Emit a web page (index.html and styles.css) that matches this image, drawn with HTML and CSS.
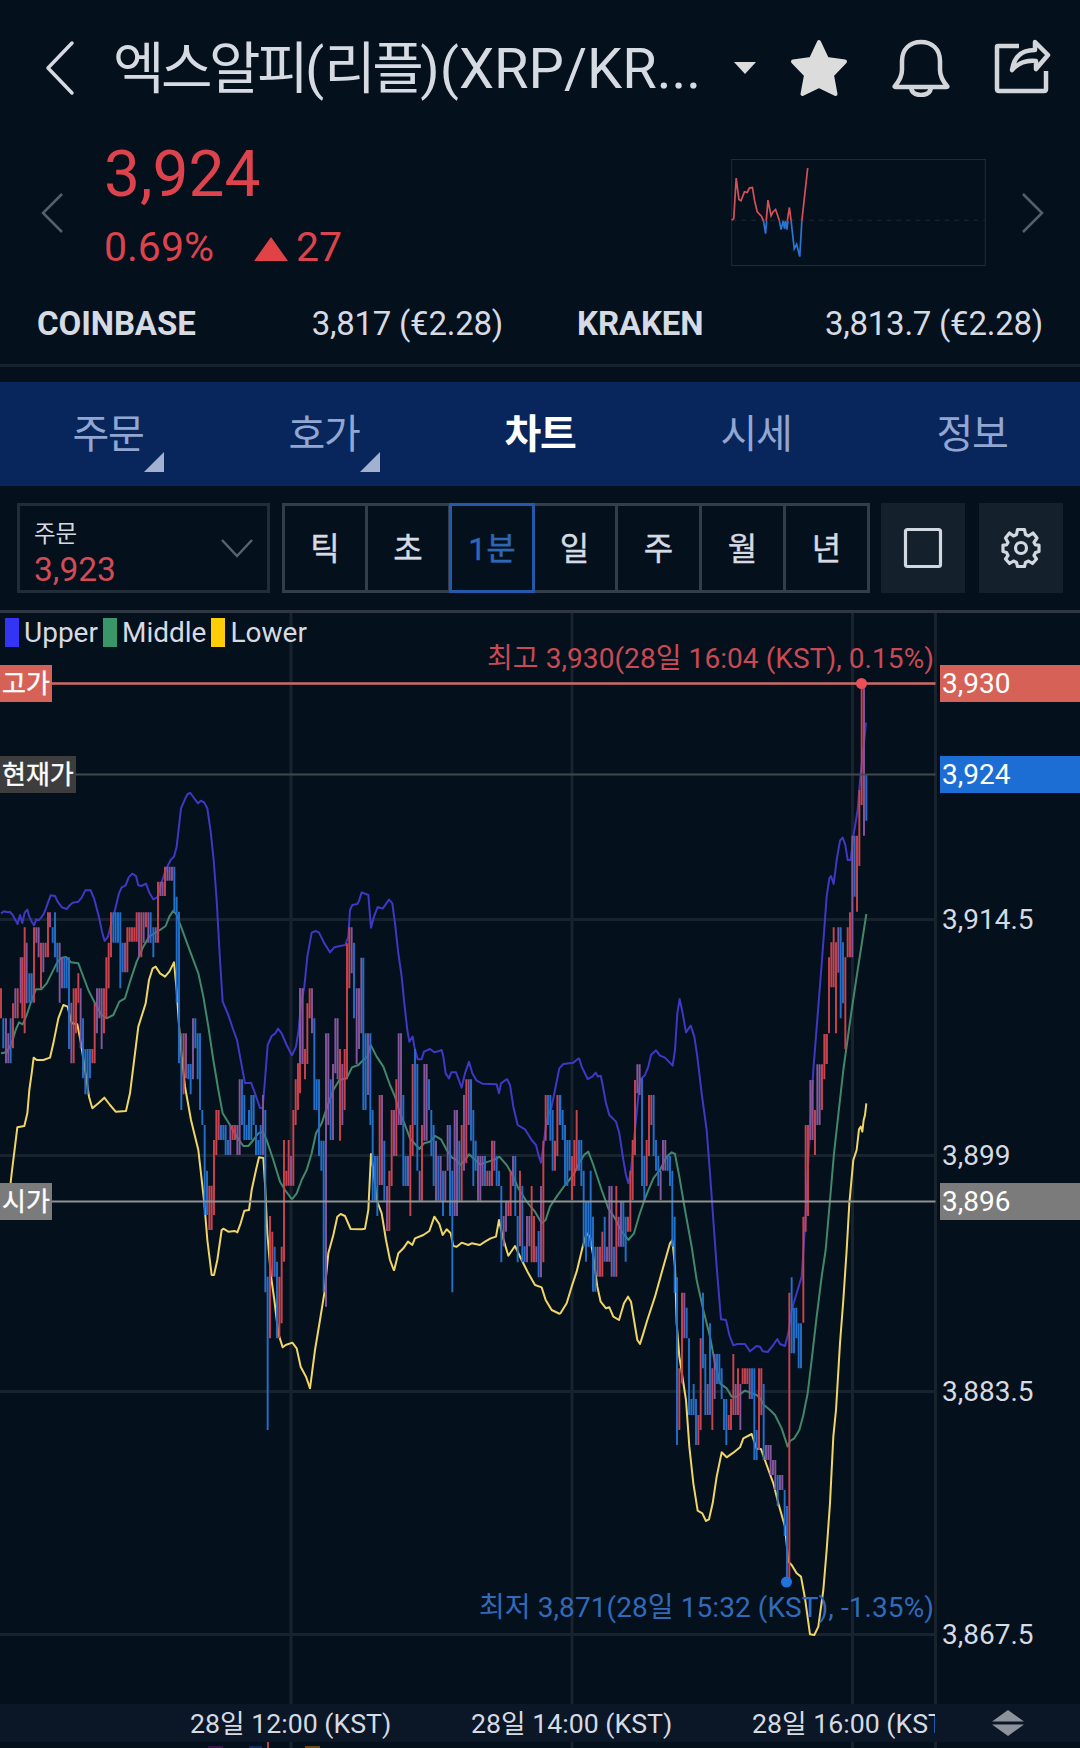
FILE: index.html
```html
<!DOCTYPE html>
<html lang="ko">
<head>
<meta charset="utf-8">
<title>XRP/KRW 차트</title>
<link rel="stylesheet" href="styles.css">
</head>
<body>
<header class="topbar">
  <svg class="back" viewBox="0 0 30 56"><path d="M27 3L3 28L27 53"/></svg>
  <h1 class="title"><span class="ko">엑스알피</span>(<span class="ko">리플</span>)(XRP/KR...</h1>
  <svg class="caret" viewBox="0 0 24 14"><path d="M1 1H23L12 13Z"/></svg>
  <svg class="star" viewBox="0 0 58 58"><path d="M29 3L37 20L55 22.500L42 36L45.500 55L29 47L12.500 55L16 36L3 22.500L21 20Z"/></svg>
  <svg class="bell" viewBox="0 0 58 58"><path d="M3 47C8 41 10 36 10 31V22C10 10 18 3 29 3S48 10 48 22V31C48 36 50 41 55 47Q56 48 54 48H4Q2 48 3 47ZM19 49C20 54 24 56 29 56S38 54 39 49"/></svg>
  <svg class="share" viewBox="0 0 58 58"><path d="M25 7H4Q3 7 3 8V50Q3 52 5 52H50Q52 52 52 50V32M41 3L54 16L42 30V22C31 21 24 24 18 31C20 18 28 11 41 11Z"/></svg>
</header>

<section class="quote">
  <svg class="nav" viewBox="0 0 22 40"><path d="M21 1L2 20L21 39"/></svg>
  <div class="quote-main">
    <div class="price">3,924</div>
    <div class="change"><span>0.69%</span><i class="up"></i><span>27</span></div>
  </div>
  <svg class="spark" viewBox="555 477 738 320" preserveAspectRatio="none">
    <rect class="spark-box" x="557" y="478.500" width="734" height="317"/>
    <path class="spark-base" d="M557 660H1291"/>
    <path class="spark-up" d="M557 660L563 655L570 534L578 598L584 602L594 575L602 577L608 564L617 562L623 600L631 635L643 648L649 662M657 662L662 600L671 647L676 636L684 628L690 645L695 662M718 662L724 622L729 662M760 662L777 504"/>
    <path class="spark-down" d="M649 662L655 700L658 662M695 662L700 688L706 662L710 686L713 662L717 688L720 662M729 662L738 746L745 732L754 769L760 662"/>
  </svg>
  <svg class="nav" viewBox="0 0 22 40"><path d="M1 1L20 20L1 39"/></svg>
</section>

<section class="markets">
  <div class="market"><b>COINBASE</b><span>3,817 (€2.28)</span></div>
  <div class="market"><b>KRAKEN</b><span>3,813.7 (€2.28)</span></div>
</section>

<nav class="tabs">
  <a class="tab more">주문</a><a class="tab more">호가</a><a class="tab active">차트</a><a class="tab">시세</a><a class="tab">정보</a>
</nav>

<section class="toolbar">
  <div class="order">
    <div class="order-text"><span class="order-label">주문</span><span class="order-price">3,923</span></div>
    <svg class="order-arrow" viewBox="0 0 34 20"><path d="M2 2L17 18L32 2"/></svg>
  </div>
  <div class="ranges">
    <span class="short">틱</span><span class="short">초</span><span class="on">1분</span><span>일</span><span>주</span><span>월</span><span>년</span>
  </div>
  <div class="tool"><svg viewBox="0 0 40 42"><rect x="2.500" y="2.500" width="35" height="37" rx="2"/></svg></div>
  <div class="tool"><svg viewBox="0 0 40 42"><path d="M16.500 2.500H23.500L24.500 7.500L27.500 9L32 6L36 11L33 15.500L34.500 18H38V24.500L34.500 25.500L33 28.500L35.500 32L31.500 36.500L27.500 34L24.500 35.500L23.500 39.500H16.500L15.500 35.500L12.500 34L8.500 36.500L4.500 32L7 28.500L5.500 25.500L2 24.500V18H5.500L7 15.500L4.500 11L8.500 6L12.500 9L15.500 7.500Z"/><circle cx="20" cy="21" r="5.500"/></svg></div>
</section>

<main class="chart">
  <div class="legend"><span class="upper">Upper</span><span class="middle">Middle</span><span class="lower">Lower</span></div>
  <svg class="plot" viewBox="0 613 1080 1091">
    <path class="grid" d="M291 613V1704M572 613V1704M852.500 613V1704M935.500 613V1704M0 919.500H935M0 1155.500H935M0 1391.500H935M0 1634.500H935"/>

    <g class="bands" transform="translate(0 760) scale(.33333)">
      <path class="u" d="M3 460L12 454L22 457L30 456L38 465L46 480L53 492L60 465L67 489L74 458L82 449L88 470L95 485L102 496L109 478L116 481L124 472L131 462L138 445L145 425L152 406L165 408L173 425L186 442L200 447L210 435L218 428L235 425L245 413L256 391L272 391L282 415L296 467L306 515L314 543L324 530L335 485L345 450L357 400L365 382L377 376L386 352L397 341L408 348L415 376L424 378L438 371L448 398L460 418L472 412L484 370L497 330L512 300L522 290L530 260L543 145L556 115L563 102L571 99L582 114L594 130L603 122L612 127L622 145L632 215L641 300L650 420L660 600L668 725L685 765L700 810L711 840L722 900L735 970L753 968L765 1000L780 1044L788 1044L795 960L803 855L815 828L826 820L834 806L845 820L860 855L876 887"/>
      <path class="m" d="M3 880L20 877L35 850L47 810L57 787L68 793L80 765L95 720L108 688L124 688L140 670L155 640L170 610L183 594L198 591L213 607L235 610L248 645L265 690L285 730L305 765L320 775L340 765L358 725L375 715L390 665L410 605L430 560L447 530L460 522L480 510L497 498L508 470L520 452L530 465L545 505L565 560L595 640L610 710L625 800L640 900L655 990L668 1060L690 1095L710 1130L730 1158L745 1158L760 1140L775 1120L788 1115L800 1140L820 1200L840 1265L855 1290L876 1318"/>
      <path class="l" d="M28 1305L35 1240L52 1102L73 1098L82 1060L88 990L95 940L101 893L110 900L130 900L150 893L160 850L175 775L190 735L203 740L215 790L232 793L243 850L255 930L267 1010L277 1045L295 1030L313 1013L330 1035L347 1055L378 1053L390 1000L400 920L415 800L437 730L447 660L458 625L467 620L480 640L495 650L508 635L522 607L530 690L540 840L555 980L573 1080L595 1170L613 1330"/>
    </g>
    <path class="l" transform="translate(0 1150) scale(.33333)" d="M613 160L622 270L635 375L642 375L652 330L665 240L670 236L685 245L705 243L712 247L722 220L733 182L747 180L755 120L768 60L777 22L790 24L795 100L802 250L812 370L823 450L835 550L848 592L857 585L877 578L890 595L902 650L918 680L930 715L945 600L960 510L973 430L985 310L1000 255L1012 200L1022 192L1035 198L1052 237L1085 238L1095 236L1105 180L1113 12L1120 60L1130 150L1145 190L1158 270L1170 330L1182 362"/>
    <g class="bands" transform="translate(280 860) scale(.33333)">
      <path class="u" d="M36 587L48 560L56 510L62 440L73 380L82 290L95 218L108 213L117 218L132 248L150 277L163 262L180 258L196 255L205 230L210 150L217 135L232 132L237 123L245 97L265 105L273 203L282 170L293 141L308 146L327 119L337 130L345 190L355 280L365 350L373 430L382 510L388 545L398 530L403 560L413 598L425 598L432 575L450 567L463 577L475 574L485 570L490 590L497 640L507 655L514 637L528 637L545 683L555 640L567 605L577 640L590 662L607 671L650 673L657 700L663 670L681 657L690 675L700 740L713 795L735 808L755 840L768 855L777 890L783 908L790 860L800 780L815 740L825 690L838 625L850 612L880 608L897 594"/>
      <path class="m" d="M36 1018L50 1000L65 960L80 930L95 880L108 820L125 790L140 745L160 690L178 660L200 655L216 622L235 615L250 600L262 590L272 555L290 590L310 620L330 675L345 710L360 760L375 795L390 835L405 852L418 867L432 850L450 845L465 828L483 838L500 870L515 892L530 900L540 915L555 900L567 883L580 895L600 913L625 905L645 898L658 890L680 915L700 950L715 985L740 1025L765 1055L785 1090L797 1080L810 1040L830 1010L855 975L880 945L900 905"/>
      <path class="l" d="M342 1232L355 1180L370 1165L384 1145L397 1155L405 1135L430 1125L448 1113L463 1070L478 1092L488 1125L500 1108L512 1120L520 1158L530 1160L545 1148L565 1155L575 1150L600 1155L615 1145L632 1135L648 1130L657 1080L668 1130L685 1187L705 1158L725 1200L745 1240L765 1275L785 1282L797 1320L815 1350L840 1362"/>
    </g>
    <g class="bands" transform="translate(560 960) scale(.33333)">
      <path class="u" d="M57 294L65 320L83 357L97 350L107 338L114 350L122 347L128 375L138 430L148 465L168 485L178 520L190 600L198 645L205 670L212 640L222 540L232 440L240 360L255 345L265 320L273 285L288 271L300 287L315 293L338 317L345 270L352 160L359 117L368 160L378 217L392 197L403 230L412 290L425 400L440 510L450 640L460 780L470 920L483 1078L498 1080L508 1125L520 1156L532 1152L555 1152L570 1174L590 1158L600 1160L608 1174L623 1176L640 1155L652 1137L660 1152L675 1158L685 1120L695 1050L710 1000L725 950L735 800L745 600L760 330L786 0L800 -190L808 -245L813 -252L821 -228L830 -300L840 -358L848 -367L856 -345L863 -300L872 -300L880 -370L893 -450L902 -560L912 -650L918 -712"/>
      <path class="m" d="M60 605L72 585L85 575L100 615L125 690L145 745L165 775L185 815L205 840L222 820L238 765L255 715L280 655L300 630L320 590L335 577L345 582L358 650L375 750L395 860L410 960L430 1050L450 1130L465 1210L480 1270L500 1285L515 1310L530 1310L555 1292L590 1305L600 1315L612 1335L630 1350L645 1365L665 1405L683 1460L690 1443L703 1435L718 1410L730 1365L743 1300L755 1200L770 1070L785 950L797 870L810 720L822 580L850 330L875 150L890 50L919 -138"/>
      <path class="l" d="M0 1062L20 1030L35 980L50 935L68 860L80 820L90 830L100 890L112 980L122 1025L138 1045L148 1042L160 1070L177 1080L192 1030L204 1010L213 1025L222 1080L232 1140L240 1152L250 1120L262 1080L285 1010L310 920L330 850L337 840L345 920L350 1090L358 1190L378 1320L388 1460L400 1570L413 1652L427 1660L438 1683L447 1678L458 1630L470 1550L485 1477L500 1492L520 1478L540 1462L550 1435L575 1422L590 1467L603 1467L620 1515L640 1570L655 1630L675 1700L685 1805L695 1815L710 1840L723 1850L735 1915L750 2023L763 2025L775 2000L790 1890L800 1770L810 1630L820 1430L828 1350L840 1150L850 1020L860 870L868 730L880 600L890 570L897 508L902 500L907 515L911 480L915 465L919 430"/>
    </g>

    <g transform="translate(0 760) scale(.33333)">
      <path class="r" d="M3 685V775M39 730V865M53 685V775M67 592V775M74 502V820M102 502V728M123 548V685M137 548V592M144 457V592M221 685V910M228 685V820M235 640V728M277 867V910M284 730V910M312 685V820M319 592V775M326 548V685M333 457V592M382 502V637M389 502V545M396 502V545M403 502V545M410 457V545M424 457V592M438 457V502M474 365V548M495 320V408M551 820V1003M628 1277V1410M635 1277V1410M642 1140V1365M649 1050V1185M656 1050V1140M698 1095V1140M705 1095V1140M810 1368V1735M817 1415V1550M838 1550V1735M845 1460V1690M852 1140V1505M859 1232V1277M866 1140V1277M880 1050V1277M887 958V1095M894 910V1050M900 685V1000"/>
      <path class="p" d="M18 775V910M25 820V910M46 685V775M62 592V730M80 548V730M109 502V548M116 502V592M130 548V637M150 457V502M179 548V728M186 592V685M214 728V910M242 685V865M291 685V820M298 685V775M305 685V867M375 548V637M417 457V592M431 457V548M445 457V548M467 502V548M481 365V408M488 365V408M502 320V362M509 320V362M516 320V362M558 820V955M579 775V958M691 1095V1185M712 1095V1185M719 958V1185M789 1005V1185M873 1187V1277"/>
      <path class="b" d="M10 775V865M32 775V910M88 640V728M95 640V728M158 502V548M165 457V592M172 548V637M193 592V685M200 592V685M207 592V867M249 775V955M256 867V1003M263 867V1003M270 867V955M340 457V548M347 457V548M354 457V548M361 457V685M368 548V637M452 457V548M460 502V592M523 320V455M530 410V728M537 455V910M544 820V1050M565 912V958M572 912V1003M586 775V865M593 820V958M600 820V1050M607 1050V1095M614 1095V1365M621 1232V1365M663 1095V1140M670 1095V1140M677 1095V1185M684 1140V1185M726 958V1095M733 1005V1140M740 1095V1140M747 1050V1140M754 1005V1140M761 1005V1095M768 1095V1185M775 1140V1185M782 1095V1185M796 1050V1597M803 1550V2010M824 1460V1550M831 1505V1735"/>
    </g>
    <g transform="translate(280 860) scale(.33333)">
      <path class="r" d="M75 567V658M82 430V612M89 385V475M180 567V842M194 567V750M201 250V658M208 202V385M299 705V975M328 932V1113M335 750V978M349 658V888M391 795V1068M398 612V888M426 795V1022M545 795V1022M559 658V910M622 932V978M636 842V978M685 1022V1068M692 932V1068M720 932V1159M755 978V1207M762 1068V1207M790 842V1207M797 705V842M825 842V932M832 705V888"/>
      <path class="p" d="M61 385V612M68 385V612M96 385V520M138 520V1340M145 520V795M159 612V840M166 475V640M173 475V658M187 612V795M215 202V340M230 385V612M237 385V567M244 293V520M264 520V705M306 705V975M321 978V1113M342 750V888M356 520V795M363 520V795M384 888V978M419 932V1022M433 612V842M440 612V842M468 842V1022M482 888V1022M496 932V1022M503 795V932M524 750V1068M531 750V1068M552 705V932M566 658V795M594 888V1022M601 888V1022M608 888V978M629 932V978M643 842V932M671 1068V1159M678 1022V1115M699 888V978M741 1068V1207M748 1068V1159M769 1159V1207M783 978V1252M839 705V795"/>
      <path class="b" d="M103 475V750M110 658V750M117 658V888M124 842V932M131 842V1297M152 658V840M222 248V475M250 293V750M257 520V750M271 520V795M278 750V1022M285 888V1022M292 888V1068M313 842V1022M370 705V978M377 888V978M405 567V795M412 612V932M447 658V750M454 750V888M461 795V978M475 888V1022M489 932V1068M510 795V1068M517 932V1297M538 842V1022M573 658V842M580 750V978M587 842V932M615 888V978M650 888V978M657 932V978M664 978V1207M706 888V1068M713 1068V1207M727 978V1207M734 1159V1207M776 1113V1252M804 705V795M811 705V842M818 750V932"/>
    </g>
    <g transform="translate(560 960) scale(.33333)">
      <path class="r" d="M36 588V720M43 540V678M50 450V632M120 860V950M127 815V950M169 678V950M204 770V815M211 632V815M218 540V720M225 360V585M260 540V678M267 405V588M274 405V495M730 770V1088M737 495V815M744 495V768M765 450V585M786 313V450M793 222V358M800 222V312"/>
      <path class="p" d="M113 860V950M141 860V905M148 678V905M155 678V950M176 770V860M183 724V860M232 313V400M239 313V405M302 632V720M309 540V632M316 540V632M751 360V540M758 360V540M772 313V495M779 313V495"/>
      <path class="b" d="M1 405V495M8 450V540M15 495V678M22 540V678M29 540V632M57 540V632M64 540V678M71 632V860M78 724V905M85 724V860M92 632V860M99 770V995M106 860V995M134 770V905M162 860V950M190 724V860M197 770V905M246 355V678M253 588V720M281 405V588M288 540V632M295 588V678M323 588V632M330 588V678M337 632V860M344 770V998"/>
    </g>
    <g transform="translate(660 1250) scale(.33333)">
      <path class="r" d="M58 355V540M66 128V400M115 495V585M122 265V540M157 355V540M206 495V540M213 447V540M220 312V495M234 355V495M248 355V402M255 355V402M262 355V402M297 355V600M304 355V495M388 128V985"/>
      <path class="p" d="M73 128V265M143 402V495M164 312V447M227 402V495M241 402V540M269 355V447M318 585V630M325 585V630M332 585V675M339 630V675M346 630V720M360 675V720M367 675V720"/>
      <path class="b" d="M51 82V585M80 173V265M87 265V495M94 447V495M101 402V495M108 447V585M129 128V355M136 312V495M150 220V495M171 312V402M178 312V402M185 355V447M192 447V540M199 447V585M276 355V447M283 355V630M290 540V630M311 402V630M353 675V768M374 720V858M381 768V990M395 82V310M402 173V310M409 173V265M416 220V355M423 220V355"/>
    </g>
    <g transform="translate(700 670) scale(.33333)">
      <path class="r" d="M380 1092V1182M387 862V1090M394 817V952M401 772V952M408 817V1090M436 862V1137M443 772V862M450 727V862M471 497V725M478 360V588M485 40V405"/>
      <path class="p" d="M415 772V908M457 497V862M492 55V497"/>
      <path class="b" d="M422 772V1045M429 817V1000M464 497V680M499 315V452"/>
    </g>

    <path class="line-high" d="M52 683.500H935.500"/>
    <path class="line-now" d="M76 774.500H935.500"/>
    <path class="line-open" d="M52 1201.500H935.500"/>
    <circle class="dot-high" cx="861.500" cy="683.500" r="5.500"/>
    <circle class="dot-low" cx="786.500" cy="1582" r="5.500"/>
    <text class="t-high" x="934" y="668" text-anchor="end" textLength="447">최고 3,930(28일 16:04 (KST), 0.15%)</text>
    <text class="t-low" x="934" y="1617" text-anchor="end" textLength="455">최저 3,871(28일 15:32 (KST), -1.35%)</text>

    <rect class="tag-high" y="665" width="52" height="37"/><text class="tag ko-tag" x="2" y="693">고가</text>
    <rect class="tag-now" y="756" width="76" height="37"/><text class="tag ko-tag" x="2" y="784">현재가</text>
    <rect class="tag-open" y="1183" width="52" height="37"/><text class="tag ko-tag" x="2" y="1211">시가</text>
    <rect class="tag-high" x="940" y="665" width="140" height="37"/><text class="tag" x="942" y="693">3,930</text>
    <rect class="tag-blue" x="940" y="756" width="140" height="37"/><text class="tag" x="942" y="784">3,924</text>
    <rect class="tag-open" x="940" y="1183" width="140" height="37"/><text class="tag" x="942" y="1211">3,896</text>
    <text x="942" y="929">3,914.5</text><text x="942" y="1165">3,899</text><text x="942" y="1401">3,883.5</text><text x="942" y="1644">3,867.5</text>
  </svg>
</main>

<footer class="axis">
  <div class="times"><span>28일 12:00 (KST)</span><span>28일 14:00 (KST)</span><span>28일 16:00 (KST)</span></div>
  <svg class="sort" viewBox="0 0 32 26"><path d="M16 0L32 11.500H0ZM0 14.500H32L16 26Z"/></svg>
</footer>
<svg class="below" viewBox="0 0 1080 6"><path class="grid" d="M291 0V6M572 0V6M852.500 0V6M935.500 0V6"/><path class="r2" d="M268 0V6"/><path fill="#3a1450" d="M208 4h15v2h-15z"/><path fill="#0b2a66" d="M249 4h13v2h-13z"/><path fill="#6b4a1c" d="M305 4h15v2h-15z"/></svg>
</body>
</html>
```
FILE: styles.css
```css
* { box-sizing: border-box; }
body {
  margin: 0;
  width: 1080px;
  height: 1748px;
  overflow: hidden;
  background: #04101c;
  color: #d6dae2;
  font-family: Roboto, "Noto Sans CJK KR", sans-serif;
  display: flex;
  flex-direction: column;
}
svg { display: block; fill: none; flex: none; }

.topbar { height: 136px; display: flex; align-items: center; padding: 0 27px 0 45px; }
.back { width: 30px; height: 56px; stroke: #d6dae2; stroke-width: 3.5; stroke-linecap: round; stroke-linejoin: round; }
.title { margin: 0 0 0 38px; padding-top: 2px; width: 591px; font-size: 56px; font-weight: 400; line-height: 80px; white-space: nowrap; }
.ko { letter-spacing: -3.5px; }
.caret { width: 24px; height: 14px; margin-left: 29px; fill: #dcdcdc; }
.star { width: 58px; height: 58px; margin-left: 33px; fill: #dcdcdc; stroke: #dcdcdc; stroke-width: 4; stroke-linejoin: round; }
.bell { width: 58px; height: 58px; margin-left: 44px; stroke: #d2d5da; stroke-width: 4.5; }
.share { width: 58px; height: 58px; margin-left: 44px; stroke: #d2d5da; stroke-width: 4.5; stroke-linejoin: round; }

.quote { height: 150px; display: flex; padding: 0 36px 0 41px; align-items: flex-start; }
.nav { width: 22px; height: 40px; margin-top: 57px; stroke: #56606c; stroke-width: 2.5; }
.quote-main { width: 668px; padding: 1px 0 0 41px; color: #dc434c; }
.price { font-size: 64px; line-height: 76px; }
.change { display: flex; align-items: center; font-size: 41px; line-height: 68px; }
.up { margin: 4px 8px 0 40px; border: 17px solid transparent; border-top: 0; border-bottom: 24px solid #e04246; }
.spark { width: 255px; height: 107px; margin: 23px 36px 0 0; }
.spark path { stroke-width: 5; }
.spark .spark-box { stroke: #1f2b36; stroke-width: 3; }
.spark .spark-base { stroke: #1d2833; stroke-width: 3; stroke-dasharray: 14 14; }
.spark .spark-up { stroke: #d4505a; }
.spark .spark-down { stroke: #2b74d0; }

.markets { height: 81px; display: flex; gap: 74px; padding: 18px 37px 0; border-bottom: 3px solid #16222e; font-size: 33px; line-height: 40px; }
.market { display: flex; justify-content: space-between; width: 466px; }
.market b { font-weight: 700; letter-spacing: -.1px; }
.market span { letter-spacing: -.25px; }

.tabs { height: 104px; margin-top: 15px; display: flex; background: #08265c; }
.tab { flex: 1; position: relative; text-align: center; font-size: 40px; letter-spacing: -1.2px; line-height: 106px; color: #92a6d2; }
.tab.active { color: #fff; font-weight: 700; }
.more::after { content: ""; position: absolute; left: 144px; top: 70px; border-left: 20px solid transparent; border-bottom: 20px solid #a3b1d0; }

.toolbar { height: 124px; display: flex; align-items: flex-start; padding: 17px 17px 0; }
.order { width: 253px; height: 90px; border: 3px solid #222d39; display: flex; align-items: center; justify-content: space-between; padding: 0 13px 0 14px; }
.order-text { display: flex; flex-direction: column; }
.order-label { font-size: 23.5px; line-height: 38px; padding-top: 5px; }
.order-price { font-size: 33.5px; line-height: 34px; color: #d44a55; }
.order-arrow { width: 34px; height: 20px; stroke: #59626d; stroke-width: 2.5; }
.ranges { width: 588px; height: 90px; margin-left: 12px; display: flex; border: 3px solid #343e4a; }
.ranges span { flex: 1; border-right: 3px solid #343e4a; text-align: center; font-size: 32px; line-height: 86px; -webkit-text-stroke: .4px currentColor; }
.ranges span:last-child { border-right: 0; }
.ranges .short { flex: none; width: 83px; }
.ranges .on { flex: none; width: 86px; margin: -3px -1px -3px -2px; border: 3px solid #2458a8; color: #2e66b8; }
.tool { width: 84px; height: 90px; margin-left: 11px; background: #15202d; display: flex; align-items: center; justify-content: center; }
.tool + .tool { margin-left: 14px; }
.tool svg { width: 40px; height: 42px; stroke: #d2d8e0; stroke-width: 3.2; stroke-linejoin: round; }

.chart { position: relative; height: 1094px; border-top: 3px solid #2d3641; }
.legend { position: absolute; left: 5px; top: 5px; display: flex; gap: 5px; font-size: 28px; line-height: 29px; }
.legend span { display: flex; gap: 5px; }
.legend span::before { content: ""; width: 14px; height: 29px; background: #3434f5; }
.legend .middle::before { background: #389668; }
.legend .lower::before { background: #ffcc08; }
.plot { width: 1080px; height: 1091px; font-size: 28px; }
.plot text { fill: #d6dae2; }
.grid { stroke: #18232e; stroke-width: 3; }
.u, .m, .l { stroke-width: 6; stroke-linejoin: round; }
.u { stroke: #4038c4; }
.m { stroke: #43876b; }
.l { stroke: #f0d666; }
.r, .p, .b { stroke-width: 5.8; }
.r { stroke: #c9434e; }
.p { stroke: #84569a; }
.b { stroke: #246fc8; }
.line-high { stroke: #cf6b67; stroke-width: 2.4; }
.line-now { stroke: #3f4a4c; stroke-width: 2; }
.line-open { stroke: #8f9391; stroke-width: 2; }
.dot-high { fill: #ee4e55; }
.dot-low { fill: #2173dc; }
.plot .t-high { fill: #c94a54; }
.plot .t-low { fill: #3269b9; }
.plot .tag { fill: #fff; }
.ko-tag { font-size: 26px; stroke: #fff; stroke-width: .4; }
.tag-high { fill: #d66257; }
.tag-now { fill: #3d3d3d; }
.tag-open { fill: #7b7b7b; }
.tag-blue { fill: #1c6ed4; }

.axis { height: 38px; display: flex; align-items: center; background: #0b1727; font-size: 26.7px; line-height: 38px; }
.times { width: 935px; padding: 2px 0 0 190px; display: flex; gap: 79px; overflow: hidden; white-space: nowrap; }
.times span { flex: none; width: 202px; }
.sort { width: 32px; height: 26px; margin-left: 57px; fill: #8d939b; }
.below { width: 1080px; height: 6px; }
.r2 { stroke: #b34650; stroke-width: 2; }
```
